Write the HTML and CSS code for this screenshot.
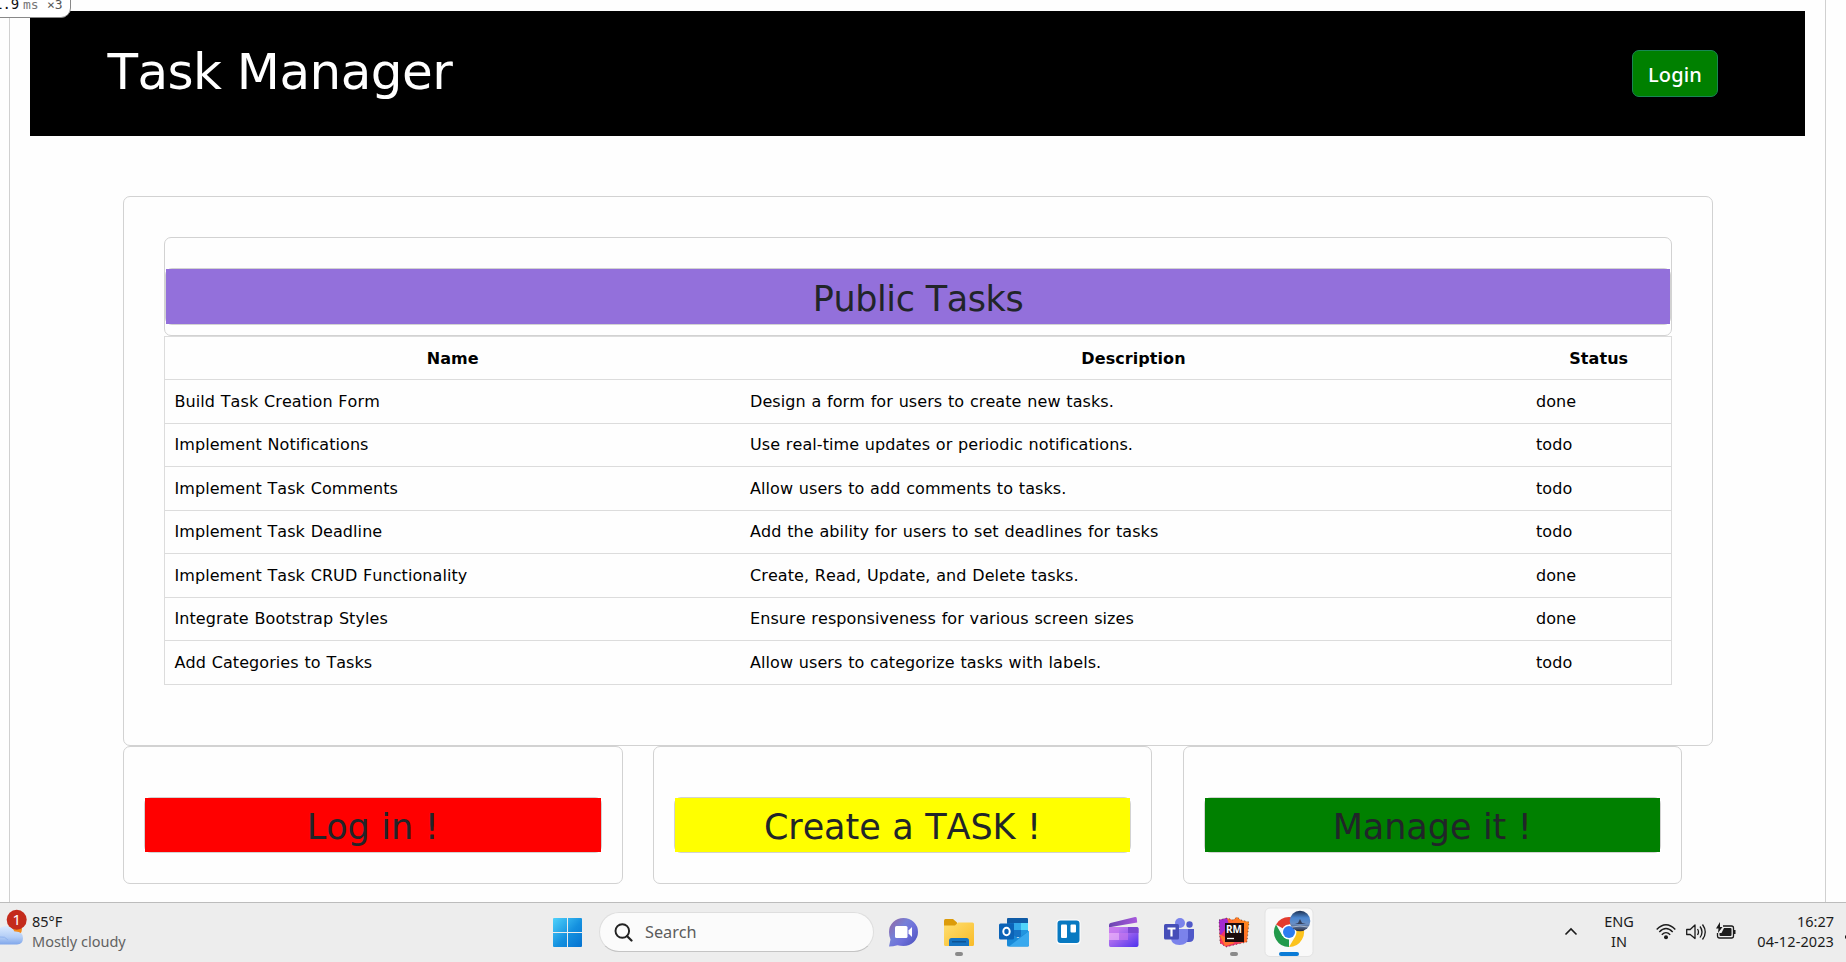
FILE: index.html
```html
<!DOCTYPE html>
<html lang="en">
<head>
<meta charset="utf-8">
<title>Task Manager</title>
<link rel="stylesheet" href="styles.css">
</head>
<body>
<div class="viewport">
  <div class="profiler"><span class="profiler-time">1.9</span><span class="profiler-unit">ms</span><span class="profiler-count">×3</span></div>
  <div class="shell">
    <header class="header">
      <h1 class="title">Task Manager</h1>
      <button class="login">Login</button>
    </header>
    <main class="main">
      <section class="card tasks">
        <div class="card banner"><div class="card banner-frame"><h2 class="banner-title">Public Tasks</h2></div></div>
        <table class="table">
          <colgroup><col class="col-name"><col class="col-desc"><col class="col-status"></colgroup>
          <thead><tr><th>Name</th><th>Description</th><th>Status</th></tr></thead>
          <tbody>
            <tr><td>Build Task Creation Form</td><td>Design a form for users to create new tasks.</td><td>done</td></tr>
            <tr><td>Implement Notifications</td><td>Use real-time updates or periodic notifications.</td><td>todo</td></tr>
            <tr><td>Implement Task Comments</td><td>Allow users to add comments to tasks.</td><td>todo</td></tr>
            <tr><td>Implement Task Deadline</td><td>Add the ability for users to set deadlines for tasks</td><td>todo</td></tr>
            <tr><td>Implement Task CRUD Functionality</td><td>Create, Read, Update, and Delete tasks.</td><td>done</td></tr>
            <tr><td>Integrate Bootstrap Styles</td><td>Ensure responsiveness for various screen sizes</td><td>done</td></tr>
            <tr><td>Add Categories to Tasks</td><td>Allow users to categorize tasks with labels.</td><td>todo</td></tr>
          </tbody>
        </table>
      </section>
      <section class="steps">
        <div class="card step"><div class="card step-frame"><h2 class="step-title red">Log in !</h2></div></div>
        <div class="card step"><div class="card step-frame"><h2 class="step-title yellow">Create a TASK !</h2></div></div>
        <div class="card step"><div class="card step-frame"><h2 class="step-title green">Manage it !</h2></div></div>
      </section>
    </main>
  </div>
</div>
<footer class="taskbar">
  <div class="weather">
    <svg class="weather-icon" width="32" height="59" viewBox="0 0 32 59">
      <defs>
        <linearGradient id="cloud" x1="0" y1="0" x2="0" y2="1"><stop offset="0" stop-color="#dcebff"/><stop offset=".6" stop-color="#b3cdf6"/><stop offset="1" stop-color="#7fa6ea"/></linearGradient>
      </defs>
      <circle cx="15" cy="26" r="7" fill="#f28a1e"/>
      <path d="M-4 41.500V30Q0 22.500 7 23q5 .3 7.500 5.500Q23 28 23 35q0 6-6 6.500z" fill="url(#cloud)"/>
      <path d="M0 34q5-1 8 3" fill="none" stroke="#8fb2ee" stroke-width="1"/>
      <circle cx="16.700" cy="16.700" r="10" fill="#c42b1c"/>
      <text x="16.800" y="22" class="badge-text">1</text>
    </svg>
    <div class="weather-text"><span class="temp">85°F</span><span class="sky">Mostly cloudy</span></div>
  </div>
  <svg class="start" width="29" height="59" viewBox="0 0 29 59">
    <defs><linearGradient id="win" x1="0" y1="15" x2="29" y2="44" gradientUnits="userSpaceOnUse"><stop offset="0" stop-color="#4fd2fb"/><stop offset=".55" stop-color="#1490df"/><stop offset="1" stop-color="#0572d0"/></linearGradient></defs>
    <path fill="url(#win)" d="M1 15h13v14H0V16q0-1 1-1zM15 15h13q1 0 1 1v13H15zM0 30h14v14H1q-1 0-1-1zM15 30h14v13q0 1-1 1H15z"/>
  </svg>
  <div class="search">
    <svg width="19" height="19" viewBox="0 0 19 19"><circle cx="8.300" cy="8" r="6.800" fill="none" stroke="#222" stroke-width="1.900"/><path d="M13 13l4.500 4.500" stroke="#222" stroke-width="2.200" stroke-linecap="round"/></svg>
    <span>Search</span>
  </div>
  <div class="apps">
    <svg width="55" height="59" viewBox="0 0 55 59">
      <defs><linearGradient id="chat" x1="13" y1="18" x2="40" y2="40" gradientUnits="userSpaceOnUse"><stop offset="0" stop-color="#9368a5"/><stop offset=".4" stop-color="#7580d8"/><stop offset=".65" stop-color="#6e70da"/><stop offset="1" stop-color="#5056c0"/></linearGradient></defs>
      <path d="M13 43.500l1.500-7Q13 33 13 29a14.500 14 0 1 1 14.500 14q-3.500 0-6-.800Q17 43.500 13 43.500z" fill="url(#chat)"/>
      <rect x="19" y="23" width="12.500" height="12" rx="1.500" fill="#fff"/><path d="M32.500 27.500l3.500-3.500v10l-3.500-3.500z" fill="#fff"/>
    </svg>
    <svg width="55" height="59" viewBox="0 0 55 59">
      <defs><linearGradient id="folder" x1="0" y1="0" x2="1" y2="1"><stop offset="0" stop-color="#ffdf70"/><stop offset="1" stop-color="#f9bb28"/></linearGradient></defs>
      <path d="M13 17.500q0-1.500 1.500-1.500H22l4 3.500v5H13z" fill="#dc9b0a"/>
      <path d="M13 22.500h11l3-3h14.500q1.500 0 1.500 1.500v20.500q0 1.500-1.500 1.500h-27q-1.500 0-1.500-1.500z" fill="url(#folder)"/>
      <path d="M18 43v-5.500q0-2.500 2.500-2.500h15q2.500 0 2.500 2.500V43z" fill="#1573c2"/><path d="M21 38.800h14" stroke="#0a4c8a" stroke-width="1.200"/>
      <rect x="24" y="49" width="8" height="4" rx="2" fill="#8a8a8a"/>
    </svg>
    <svg width="55" height="59" viewBox="-1 0 55 59">
      <path d="M21 15h19q1 0 1 1v18H20V16q0-1 1-1z" fill="#0f5ba6"/><path d="M20 20h14v14H20z" fill="#1572c4"/><path d="M27 20h7v7h-7z" fill="#31a8e9"/><path d="M34 20h7v14h-7z" fill="#50d4fb"/><path d="M34 27h7v7h-7z" fill="#2295df"/>
      <path d="M20 28l11 7 11-7v14q0 1.500-1.500 1.500h-19Q20 43.500 20 42z" fill="#198ad8"/><path d="M42 28v14q0 1.500-1.500 1.500H22z" fill="#39a9ee"/>
      <rect x="12" y="20.500" width="15" height="16" rx="1.500" fill="#0b63b7"/><ellipse cx="19.500" cy="28.500" rx="3.200" ry="3.700" fill="none" stroke="#fff" stroke-width="2"/>
    </svg>
    <svg width="55" height="59" viewBox="-1 0 55 59">
      <rect x="14.500" y="16.500" width="24" height="25" rx="4" fill="#fff"/><rect x="15.500" y="17.500" width="22" height="22.500" rx="3" fill="#0879c1"/>
      <rect x="19" y="21.500" width="6" height="13.500" rx="1" fill="#fff"/><rect x="28.500" y="21.500" width="5.500" height="8" rx="1" fill="#fff"/>
    </svg>
    <svg width="55" height="59" viewBox="0 0 55 59">
      <defs><linearGradient id="clapTop" x1="0" y1="0" x2="1" y2="0"><stop offset="0" stop-color="#6a45b0"/><stop offset="1" stop-color="#a959dd"/></linearGradient>
      <linearGradient id="clap" x1="0" y1="0" x2="1" y2="1"><stop offset="0" stop-color="#d98bf2"/><stop offset=".5" stop-color="#9a61ee"/><stop offset="1" stop-color="#4c32ee"/></linearGradient></defs>
      <path d="M13 22q0-1.500 1.500-2L39 14q1.500-.300 1.700 1l.5 4.500L15 24H13z" fill="url(#clapTop)"/>
      <path d="M13 24h27.500q2 0 2 2v16q0 2-2 2h-26q-1.500 0-1.500-2z" fill="url(#clap)"/><path d="M13 24h10v6H13zM23 30h9v7h-9z" fill="#c77aee" opacity=".65"/><path d="M32 24h9q1.500 0 1.500 1.500V30H32z" fill="#7b48d2"/><path d="M13 30h10v7H13z" fill="#eeb4fa" opacity=".7"/>
    </svg>
    <svg width="55" height="59" viewBox="-1 0 55 59">
      <circle cx="28" cy="20" r="5" fill="#7b83eb"/><circle cx="37.500" cy="21.500" r="3.200" fill="#5059c9"/>
      <path d="M33 26h9v8q0 5-5 5h-4z" fill="#5059c9"/><path d="M19 26h17v8.500q0 7.500-8.500 7.500T19 34.500z" fill="#7b83eb"/>
      <rect x="12" y="21" width="15" height="15.500" rx="1.500" fill="#464eb8"/><path d="M15.500 25.500h8M19.500 25.500v8" stroke="#fff" stroke-width="2.200"/>
    </svg>
    <svg width="55" height="59" viewBox="-1 0 55 59">
      <defs><linearGradient id="rm" x1="12" y1="40" x2="42" y2="18" gradientUnits="userSpaceOnUse"><stop offset="0" stop-color="#ff3358"/><stop offset=".35" stop-color="#ee336e"/><stop offset=".6" stop-color="#ff6b2a"/><stop offset="1" stop-color="#ff8c16"/></linearGradient></defs>
      <path d="M12 17l8-2 6 2 4-3 4 3 8 2-2 20-9 2-12 3-6-4z" fill="url(#rm)"/><path d="M12 17l8-2 2 7-9 11z" fill="#a32bd0"/><path d="M12 31l6 12 10-3-10-6z" fill="#ff7430"/>
      <path d="M12 17l8-2 6 2 4-3 4 3 8 2-2 20-9 2-12 3-6-4z" fill="none" stroke="#111" stroke-width=".6" stroke-dasharray="1 2.500"/>
      <rect x="18" y="20" width="19" height="19" fill="#1c0b0b"/>
      <text x="19" y="29.500" class="rm-text">RM</text><path d="M20 35.500h7" stroke="#fff" stroke-width="1.300"/>
      <rect x="23" y="49" width="8" height="4" rx="2" fill="#8a8a8a"/>
    </svg>
    <svg width="55" height="59" viewBox="0 0 55 59">
      <defs><linearGradient id="photo" x1="0" y1="0" x2="0" y2="1"><stop offset="0" stop-color="#1d3050"/><stop offset=".35" stop-color="#4a86d0"/><stop offset=".65" stop-color="#6b8fc4"/><stop offset="1" stop-color="#2c2d3d"/></linearGradient></defs>
      <rect x="4" y="5" width="48" height="48.500" rx="5" fill="#f9f9f9" stroke="#e3e3e3"/>
      <g transform="translate(0 -5)">
        <path d="M28 34L15 26.500A15 15 0 0 1 41 26.500H28z" fill="#e33b2e"/>
        <path d="M28 34L28 49A15 15 0 0 1 15 26.500L21.500 38z" fill="#229a4b"/>
        <path d="M28 26.500H41A15 15 0 0 1 28 49L34.500 38z" fill="#fcc31e"/>
        <circle cx="28" cy="34" r="7.500" fill="#fff"/><circle cx="28" cy="34" r="6" fill="#2e7cf0"/>
      </g>
      <circle cx="39" cy="18" r="10.300" fill="url(#photo)"/><path d="M34 21l3-1 2-4 2 4 4 1z" fill="#34405c"/><path d="M31 24q8-2 16 0" stroke="#a9b6cb" fill="none"/>
      <rect x="18" y="49" width="20" height="4" rx="2" fill="#0a7bd6"/>
    </svg>
  </div>
  <div class="tray">
    <svg width="14" height="59" viewBox="0 0 14 59"><path d="M1.500 31.500L7 26l5.500 5.500" fill="none" stroke="#1b1b1b" stroke-width="1.600"/></svg>
    <div class="lang"><span>ENG</span><span>IN</span></div>
    <svg class="wifi" width="20" height="59" viewBox="0 0 20 59"><g fill="none" stroke="#1b1b1b" stroke-width="1.400"><path d="M.7 26.500q9.300-9.500 18.600 0M3.300 29q6.700-7 13.400 0M5.800 31.700q4.200-4.200 8.400 0"/></g><circle cx="10" cy="34.300" r="2" fill="#1b1b1b"/></svg>
    <svg class="volume" width="20" height="59" viewBox="0 0 20 59"><g fill="none" stroke="#1b1b1b" stroke-width="1.300"><path d="M.7 26.500h3.500L9 22v13.500L4.200 31.500H.7z" stroke-linejoin="round"/><path d="M11.500 26q2 3 0 6M14 23.500q4 5.300 0 11M16.500 21.500q5.500 7.500 0 15"/></g></svg>
    <svg class="battery" width="20" height="59" viewBox="0 0 20 59"><path d="M7 23h8.500q2 0 2 2v8q0 2-2 2h-12q-2 0-2-2v-3" fill="none" stroke="#1b1b1b" stroke-width="1.300"/><path d="M8 25h6.500q1 0 1 1v6q0 1-1 1h-10q-1 0-1-1v-2h2z" fill="#1b1b1b"/><path d="M18 27h1.500v4H18zM4 19L0 25.500h2.500L2 30l4.500-6H4z" fill="#1b1b1b"/></svg>
    <div class="clock"><span>16:27</span><span class="date">04-12-2023</span></div>
    <svg class="bell" width="2" height="59" viewBox="0 0 2 59"><path d="M1 32.500h1v3H1z" fill="#1b1b1b"/></svg>
  </div>
</footer>
</body>
</html>
```

FILE: styles.css
```css
* { box-sizing: border-box; }
body {
  margin: 0;
  width: 1846px;
  height: 962px;
  overflow: hidden;
  display: flex;
  flex-direction: column;
  background: #fefefe;
  color: #212529;
  font-family: Verdana, "DejaVu Sans", sans-serif;
  font-kerning: none;
}
h1, h2 { margin: 0; font-weight: 400; }
.viewport { position: relative; height: 902px; }
.shell {
  height: 902px;
  margin: 0 20px 0 9px;
  padding: 11px 20px 0;
  border: solid #d0d0d0;
  border-width: 0 1px;
}
.profiler {
  position: absolute;
  left: -7px;
  top: -10px;
  width: 78px;
  height: 28px;
  padding-top: 5px;
  display: flex;
  align-items: baseline;
  border: 1px solid #888;
  border-radius: 0 0 10px 0;
  background: #fff;
  font: 13px/16px "DejaVu Sans Mono", monospace;
  color: #777;
}
.profiler-time { width: 29px; color: #111; font-size: 14px; }
.profiler-unit { width: 24px; }
.profiler-count { color: #555; }
.header {
  height: 125px;
  padding: 0 87px 0 77px;
  display: flex;
  align-items: center;
  justify-content: space-between;
  background: #000;
}
.title {
  padding: 0 0 4px .5px;
  color: #fff;
  font-size: 50px;
  line-height: 60px;
  letter-spacing: -.55px;
}
.login {
  width: 86px;
  height: 47px;
  margin-bottom: 1px;
  padding: 3px 0 0;
  border: 1px solid #198754;
  border-radius: 7px;
  background: green;
  color: #fff;
  font: 500 20px/28px "Noto Sans", sans-serif;
  letter-spacing: .2px;
}
.main { width: 1590px; margin: 60px 0 0 93px; }
.card { border: 1px solid #d2d2d2; border-radius: 7px; }
.tasks { height: 550px; padding: 40px; }
.banner { height: 99px; padding-top: 30px; }
.banner-frame { height: 57px; }
.banner-title {
  height: 55px;
  background: #9370db;
  font-size: 35px;
  line-height: 60px;
  letter-spacing: -.4px;
  word-spacing: .5px;
  text-align: center;
}
.table {
  width: 1508px;
  table-layout: fixed;
  border-collapse: collapse;
  border: 1px solid #dcdcdc;
  color: #000;
  font-size: 16px;
  letter-spacing: .07px;
  word-spacing: .6px;
}
.col-name { width: 576px; }
.col-desc { width: 786px; }
.table tr { height: 43.5px; border-bottom: 1px solid #dcdcdc; }
.table th, .table td { padding: 0 10px; line-height: 24px; }
.table thead tr { height: 43px; }
.table th { padding-top: 1px; }
.table td { padding-left: 9.500px; padding-top: 1px; text-align: left; }
.steps { display: flex; gap: 30.250px; }
.step { width: 499.500px; height: 138px; padding: 50px 20px 0; }
.step-frame { height: 56px; }
.step-title {
  height: 54px;
  font-size: 35px;
  line-height: 58px;
  letter-spacing: -.05px;
  word-spacing: .5px;
  text-align: center;
}
.red { background: red; }
.yellow { background: yellow; }
.green { background: green; }

.taskbar {
  height: 60px;
  display: flex;
  border-top: 1px solid #bcbcbc;
  background: #ededed;
  color: #1b1b1b;
  font: 14.500px/20px "Noto Sans", sans-serif;
}
.taskbar svg { display: block; flex: none; }
.weather { display: flex; width: 553px; }
.weather-text, .lang, .clock { display: flex; flex-direction: column; padding-top: 8px; }
.sky { color: #626262; }
.date { letter-spacing: .1px; }
.badge-text { fill: #fff; font: 15px "Noto Sans", sans-serif; text-anchor: middle; }
.rm-text { fill: #fff; font: bold 10px "Noto Sans", sans-serif; }
.search {
  width: 275px;
  height: 40px;
  margin: 9px 2px 0 17px;
  padding: 0 14px;
  display: flex;
  align-items: center;
  gap: 12px;
  border: 1px solid #dedede;
  border-bottom-color: #c4c4c4;
  border-radius: 20px;
  background: #fbfbfb;
  color: #5c5c5c;
  font-size: 16.300px;
}
.apps { display: flex; width: 440px; margin-right: 248px; }
.tray { display: flex; }
.lang { width: 50px; margin-left: 16px; align-items: center; }
.wifi { margin-left: 12px; }
.volume, .battery { margin-left: 10px; }
.clock { width: 98px; align-items: flex-end; }
.bell { margin-left: 10px; }
```
